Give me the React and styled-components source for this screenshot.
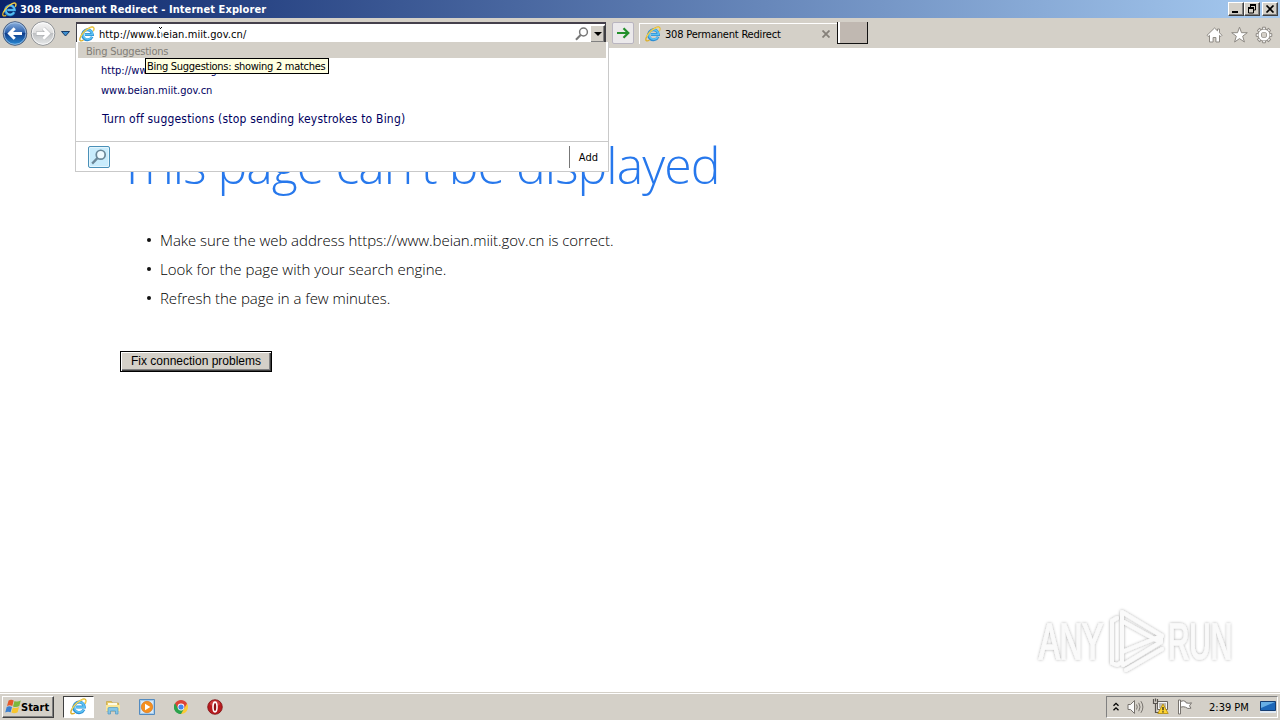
import React from 'react'
import styled, {createGlobalStyle} from 'styled-components'

const tahoma = '"DejaVu Sans Condensed", "DejaVu Sans", Tahoma, sans-serif'
const segoe = '"Open Sans", "Noto Sans", sans-serif'

const GlobalStyle = createGlobalStyle`
  * {
    box-sizing: border-box;
  }

  body {
    margin: 0;
    overflow: hidden;
    background: #fff;
  }

  svg {
    display: block;
    flex: none;
  }
`

const Screen = styled.div`
  position: relative;
  display: flex;
  flex-direction: column;
  width: 1280px;
  height: 720px;
  background: #fff;
  font-family: ${tahoma};
  font-size: 11px;
  color: #000;
`

const Label = styled.span`
  padding-top: ${props => props.$drop || 0}px;
  font-family: ${props => props.$font || tahoma};
  font-size: ${props => props.$size || 11}px;
  font-weight: ${props => props.$weight || 400};
  letter-spacing: ${props => props.$track || 0}px;
  color: ${props => props.$color || '#000'};
  line-height: 14px;
  white-space: nowrap;
`

const TitleBar = styled.header`
  display: flex;
  align-items: center;
  gap: 3px;
  height: 18px;
  padding: 0 2px 0 2px;
  background: linear-gradient(90deg, #0a246a, #a6caf0);
`

const WindowButtons = styled.div`
  display: flex;
  margin-left: auto;
`

const WindowButton = styled.button`
  display: flex;
  align-items: center;
  justify-content: center;
  width: 16px;
  height: 14px;
  margin-left: ${props => props.$gap || 0}px;
  padding: 0;
  border: 1px solid;
  border-color: #fff #404040 #404040 #fff;
  box-shadow: inset -1px -1px 0 #808080;
  background: #d4d0c8;
`

const ToolBar = styled.nav`
  display: flex;
  align-items: flex-start;
  height: 30px;
  padding: 3px 7px 0 2px;
  background: #d4d0c8;
`

const HistoryButtons = styled.div`
  display: flex;
  align-items: center;
  width: 74px;
  height: 25px;
  gap: 2px;
`

const AddressBar = styled.div`
  display: flex;
  align-items: center;
  width: 530px;
  height: 21px;
  margin-top: 1px;
  padding: 0 0 0 2px;
  border: 1px solid #404048;
  border-top: 2px solid #45404c;
  border-bottom: 0;
  background: #fff;
`

const AddressText = styled.div`
  display: flex;
  flex: 1;
  padding-left: 4px;
`

const DropButton = styled.button`
  display: flex;
  align-items: center;
  justify-content: center;
  width: 15px;
  height: 18px;
  margin-left: 1px;
  padding: 0;
  border: 1px solid;
  border-color: #fff #404040 #404040 #fff;
  box-shadow: inset -1px -1px 0 #808080;
  background: #d4d0c8;
`

const GoButton = styled.button`
  display: flex;
  align-items: center;
  justify-content: center;
  width: 22px;
  height: 22px;
  margin: 1px 5px 0 6px;
  padding: 0;
  border: 1px solid #b9b5c0;
  border-radius: 2px;
  background: #ebe9eb;
`

const Tab = styled.div`
  display: flex;
  align-items: center;
  width: 198px;
  height: 21px;
  margin-top: 2px;
  padding: 0 7px 0 5px;
  border-top: 1px solid #fff;
  border-left: 1px solid #fff;
`

const TabTitle = styled.div`
  display: flex;
  flex: 1;
  padding-left: 4px;
`

const NewTab = styled.div`
  width: 31px;
  height: 22px;
  margin-top: 1px;
  border: solid #111;
  border-width: 0 1px 1px 1px;
  box-shadow: inset 2px 0 0 #fff;
  background: #c0b8b1;
`

const Commands = styled.div`
  display: flex;
  align-items: center;
  gap: 7px;
  height: 28px;
  margin-left: auto;
`

const Page = styled.main`
  flex: 1;
  padding: 83px 0 0 120px;
`

const Heading = styled.h1`
  margin: 0 0 0 -1px;
  font-family: ${segoe};
  font-size: 50px;
  font-weight: 300;
  line-height: 68px;
  letter-spacing: -0.96px;
  color: #2778ec;
  white-space: nowrap;
`

const Tips = styled.ul`
  margin: 26px 0 0;
  padding: 0;
  list-style: none;
`

const Tip = styled.li`
  display: flex;
  align-items: center;
  height: 29px;
  padding-left: 27px;
  gap: 9px;

  &::before {
    content: '';
    width: 4px;
    height: 4px;
    border-radius: 50%;
    background: #111;
  }
`

const FixButton = styled.button`
  display: flex;
  align-items: center;
  justify-content: center;
  width: 152px;
  height: 21px;
  margin-top: 39px;
  padding: 0 0 2px;
  border: 1px solid #000;
  box-shadow: inset 1px 1px 0 #fff, inset -1px -1px 0 #404040, inset -2px -2px 0 #808080;
  background: #d4d0c8;
`

const Suggestions = styled.section`
  position: absolute;
  top: 42px;
  left: 75px;
  width: 534px;
  height: 130px;
  display: flex;
  flex-direction: column;
  border: 1px solid #c9c9c9;
  border-top: 0;
  background: #fff;
`

const SuggestionsTitle = styled.div`
  display: flex;
  align-items: center;
  height: 16px;
  margin: 0 2px;
  padding: 2px 0 0 8px;
  background: #d4d0c8;
`

const SuggestionList = styled.div`
  display: flex;
  flex: 1;
  flex-direction: column;
  padding: 3px 0 0 25px;
`

const Suggestion = styled.div`
  display: flex;
  align-items: center;
  height: 20px;
  margin-top: ${props => props.$top || 0}px;
  padding-left: ${props => props.$indent || 0}px;
`

const SuggestionsFooter = styled.div`
  display: flex;
  align-items: center;
  justify-content: space-between;
  height: 30px;
  padding: 0 10px 0 12px;
  border-top: 1px solid #c9c9c9;
`

const Provider = styled.div`
  display: flex;
  align-items: center;
  justify-content: center;
  width: 22px;
  height: 22px;
  border: 1px solid #4a90b8;
  border-radius: 2px;
  background: #c9ecfc;
  box-shadow: inset 0 0 0 1px #e4f6fe;
`

const AddLink = styled.div`
  display: flex;
  align-items: center;
  height: 22px;
  padding-left: 9px;
  border-left: 1px solid #777;
`

const Tooltip = styled.div`
  position: absolute;
  top: 58px;
  left: 145px;
  display: flex;
  align-items: center;
  width: 184px;
  height: 16px;
  padding-left: 1px;
  border: 1px solid #000;
  background: #ffffe1;
`

const Pointer = styled.svg`
  position: absolute;
  top: 26px;
  left: 158px;
`

const Watermark = styled.div`
  position: absolute;
  top: 604px;
  left: 1030px;
`

const TaskBar = styled.footer`
  display: flex;
  align-items: center;
  height: 28px;
  padding: 2px 2px 2px 2px;
  border-top: 1px solid #d4d0c8;
  box-shadow: inset 0 1px 0 #fff;
  background: #d4d0c8;
`

const StartButton = styled.button`
  display: flex;
  align-items: center;
  width: 52px;
  height: 22px;
  padding: 0 0 0 2px;
  border: 1px solid;
  border-color: #fff #404040 #404040 #fff;
  box-shadow: inset -1px -1px 0 #808080;
  background: #d4d0c8;
`

const TaskButton = styled.div`
  display: flex;
  align-items: center;
  justify-content: center;
  width: ${props => (props.$active ? 31 : 34)}px;
  height: 22px;
  margin-left: ${props => props.$left || 0}px;
  border: ${props => (props.$active ? '1px solid' : '0')};
  border-color: #404040 #fff #fff #404040;
  background: ${props => (props.$active ? '#fff' : 'transparent')};
`

const Tray = styled.div`
  display: flex;
  align-items: center;
  width: 172px;
  height: 22px;
  margin-left: auto;
  padding-left: 6px;
  border: 1px solid;
  border-color: #808080 #fff #fff #808080;
`

const TrayIcons = styled.div`
  display: flex;
  align-items: center;
  gap: 8px;
  width: 96px;
`

const Clock = styled.div`
  display: flex;
  width: 51px;
`

function IeIcon({size = 16}) {
    return (
        <svg width={size} height={size} viewBox="0 0 16 16" fill="none">
            <path d="M13.1 10.800A5 5 0 1 1 13.500 8.500H5.800" stroke="#2d8fd4" strokeWidth="2.800"/>
            <path d="M12.800 11A4.700 4.700 0 1 1 13.500 8.500H5.800" stroke="#5cc2f3" strokeWidth="1.600"/>
            <path d="M14.200 5.300C16 1.300 14.200.1 10.800 1.700 7 3.500 3.200 7.300 1.500 11c-1.600 3.400-.2 4.800 3 3.200" stroke="#dcb02c" strokeWidth="1.400"/>
            <path d="M14.200 4.800C15.500 1.500 14 .5 10.800 2 7 3.800 3.500 7.200 1.800 10.800" stroke="#fbe36a" strokeWidth=".8"/>
        </svg>
    )
}

function BackIcon() {
    return (
        <svg width="26" height="25" viewBox="0 0 26 25">
            <defs>
                <linearGradient id="back" x2="0" y2="1">
                    <stop stopColor="#8fb2de"/>
                    <stop offset=".45" stopColor="#2e63ae"/>
                    <stop offset=".5" stopColor="#103e8b"/>
                    <stop offset="1" stopColor="#2b8ed8"/>
                </linearGradient>
            </defs>
            <circle cx="13" cy="12.5" r="11.8" fill="url(#back)" stroke="#4b5f7e" strokeWidth="1"/>
            <circle cx="13" cy="12.5" r="10.8" fill="none" stroke="#b7d2ef" strokeWidth=".7"/>
            <path d="M20 12.500H7.500M12.700 7.300 7.500 12.500l5.200 5.200" fill="none" stroke="#fff" strokeWidth="3"/>
        </svg>
    )
}

function ForwardIcon() {
    return (
        <svg width="26" height="25" viewBox="0 0 26 25">
            <defs>
                <linearGradient id="forward" x2="0" y2="1">
                    <stop stopColor="#f6f6f6"/>
                    <stop offset=".48" stopColor="#dcdcdc"/>
                    <stop offset=".5" stopColor="#bfc1c3"/>
                    <stop offset="1" stopColor="#e8eaeb"/>
                </linearGradient>
            </defs>
            <circle cx="13" cy="12.5" r="11.8" fill="url(#forward)" stroke="#8d9094"/>
            <circle cx="13" cy="12.5" r="10.8" fill="none" stroke="#fff" strokeWidth=".8"/>
            <path d="M6 12.500h12.500M13.300 7.300l5.200 5.200-5.200 5.200" fill="none" stroke="#aaadb0" strokeWidth="4"/>
            <path d="M6.500 12.500h12M13.300 7.300l5.200 5.200-5.200 5.200" fill="none" stroke="#fff" strokeWidth="3"/>
        </svg>
    )
}

function SearchIcon({size = 14, color = '#777', fill = 'none'}) {
    return (
        <svg width={size} height={size} viewBox="0 0 14 14" stroke={color}>
            <circle cx="8.5" cy="5" r="3.9" strokeWidth="1.5" fill={fill}/>
            <path d="M5.6 8 1 12.8" strokeWidth="2"/>
        </svg>
    )
}

function WindowsFlag() {
    return (
        <svg width="16" height="16" viewBox="0 0 16 16">
            <path d="M3.600 1.500C5.400.4 7 .5 8.700 1.500L7.300 7C5.500 6.100 3.900 6.200 2 7z" fill="#e5592a"/>
            <path d="M9.500 1.900c2 1 3.900.9 6.300-.3L14.300 7c-2.200 1.100-4.200 1.200-6.300.4z" fill="#7cb83c"/>
            <path d="M1.700 8C3.500 7.100 5.200 7.200 7 8L5.600 13.300C3.900 12.500 2.200 12.500.2 13.400z" fill="#3b7fd0"/>
            <path d="M7.800 8.400c2.100.9 4 .8 6.200-.3l-1.400 5.200c-2.200 1.200-4.200 1.200-6.200.3z" fill="#f7c52e"/>
        </svg>
    )
}

function ExplorerIcon() {
    return (
        <svg width="16" height="16" viewBox="0 0 16 16">
            <path d="M1.500 2.500h5l1 1.500h6v8h-12z" fill="#e8c964" stroke="#c5a342" strokeWidth=".7"/>
            <path d="M3 4h9v3H3z" fill="#fffbe4"/>
            <path d="M1 6h14v6H1z" fill="#fae697"/>
            <path d="M3 15V9.500Q3 8.500 4 8.500h8q1 0 1 1V15h-2.500v-3h-5v3z" fill="#84c5e6" stroke="#4c98c3" strokeWidth=".7"/>
        </svg>
    )
}

function PlayerIcon() {
    return (
        <svg width="16" height="16" viewBox="0 0 16 16">
            <path d="M.5.500h15v15H.500z" fill="#a8cdec" stroke="#538bc0"/>
            <path d="M2 2h12v12H2z" fill="#d6e9f8"/>
            <circle cx="8" cy="8" r="5.700" fill="#f5901f" stroke="#d66c0b" strokeWidth=".6"/>
            <path d="M6 4.800 11.300 8 6 11.200z" fill="#fff"/>
        </svg>
    )
}

function ChromeIcon() {
    return (
        <svg width="14" height="14" viewBox="0 0 14 14">
            <path d="M7 7 .94 3.500A7 7 0 0 1 13.060 3.500z" fill="#dc4437"/>
            <path d="M7 7 13.060 3.500A7 7 0 0 1 7 14z" fill="#fbcb36"/>
            <path d="M7 7v7A7 7 0 0 1 .94 3.500z" fill="#2ba24c"/>
            <path d="M7 3.500h6.060L10 8.800zM4 8.800.94 3.500 7 3.500z" fill="#dc4437"/>
            <path d="M.94 3.500 4 8.800 7 10.500 10 8.800 7 14A7 7 0 0 1 .94 3.500z" fill="#2ba24c"/>
            <circle cx="7" cy="7" r="3.400" fill="#fff"/>
            <circle cx="7" cy="7" r="2.600" fill="#4385ed"/>
        </svg>
    )
}

function OperaIcon() {
    return (
        <svg width="16" height="16" viewBox="0 0 16 16">
            <circle cx="8" cy="8" r="7.300" fill="#b91b1f" stroke="#7d1013" strokeWidth=".8"/>
            <ellipse cx="8" cy="4.500" rx="5" ry="3" fill="#d95555" opacity=".6"/>
            <ellipse cx="8" cy="8" rx="2" ry="4.900" fill="#8d1014" stroke="#fff" strokeWidth="1.600"/>
        </svg>
    )
}

function HomeIcon() {
    return (
        <svg width="18" height="18" viewBox="0 0 18 18">
            <path d="M9.500 2 2 9.300l1.200 1.200L4.500 9.400V16h3.600v-4.500h2.800V16h3.600V9.400l1.300 1.100L17 9.300l-2.500-2.500V3h-2v1.900z" fill="#fff" stroke="#8d8983" strokeWidth="1"/>
        </svg>
    )
}

function StarIcon() {
    return (
        <svg width="18" height="18" viewBox="0 0 18 18">
            <path d="m9.500 1.200 2 5.500h5.800l-4.600 3.500 1.700 5.800-4.900-3.400L4.600 16l1.700-5.800-4.600-3.500h5.800z" fill="#fff" stroke="#8d8983"/>
        </svg>
    )
}

function GearIcon() {
    const teeth = [0, 45, 90, 135, 180, 225, 270, 315]
    return (
        <svg width="18" height="18" viewBox="0 0 18 18">
            {teeth.map(angle => (
                <path key={angle} d="M7.200 4 7.600 1.200h2.800L10.800 4" fill="#fff" stroke="#8d8983" transform={`rotate(${angle} 9 9)`}/>
            ))}
            <circle cx="9" cy="9" r="4.300" fill="none" stroke="#8d8983" strokeWidth="3.800"/>
            <circle cx="9" cy="9" r="4.300" fill="none" stroke="#fff" strokeWidth="2.500"/>
        </svg>
    )
}

function TrayGlyphs() {
    return (
        <TrayIcons>
            <svg width="6" height="10" viewBox="0 0 6 10" fill="none" stroke="#000" strokeWidth="1.300">
                <path d="M.5 3.800 3 1.300l2.500 2.500M.5 8.300 3 5.800l2.500 2.500"/>
            </svg>
            <svg width="17" height="16" viewBox="0 0 17 16" fill="none" stroke="#77736e">
                <path d="M1 5.500h2.500L7.500 1.500v13l-4-4H1z" fill="#fafafa"/>
                <path d="M9.500 5.500q1.500 2.500 0 5M11.700 3.800q2.700 4.200 0 8.400M13.900 2.200q4 5.800 0 11.600"/>
            </svg>
            <svg width="17" height="17" viewBox="0 0 17 17">
                <path d="M5.500 3.500h10v8h-10z" fill="#f4f4f4" stroke="#67635e"/>
                <path d="M7 5h7v5H7z" fill="#bcb9b4"/>
                <path d="M1.500 1v4.500h4V1M3.500 5.500v9H8M3.500.500v3" fill="none" stroke="#57534e" strokeWidth="1.200"/>
                <path d="m11 6 5.200 9.500H5.800z" fill="#ffd530" stroke="#b18908" strokeWidth=".8"/>
                <path d="M11 9v3.200M11 13.200v1.300" stroke="#222" strokeWidth="1.300"/>
            </svg>
            <svg width="16" height="16" viewBox="0 0 16 16" fill="#fff" stroke="#77736e">
                <path d="M3.500 2.500q3-1.500 5 0l.5 1.300q3 1 5.500 0l-2 3 1.500 2.400q-3.500 1-5.500-1-2-1-5 0z"/>
                <path d="M1.500 1v14h2V1z"/>
            </svg>
        </TrayIcons>
    )
}

function WatermarkLogo() {
    return (
        <svg width="212" height="72" viewBox="0 0 212 72">
            <defs>
                <filter id="soft" x="-10%" y="-20%" width="120%" height="140%">
                    <feDropShadow dx="0" dy="0" stdDeviation="1.800" floodColor="#000" floodOpacity=".34"/>
                </filter>
            </defs>
            <g filter="url(#soft)" fill="#fafafa" fontFamily='"Liberation Sans Narrow", "Liberation Sans", sans-serif' fontSize="50" stroke="#fafafa" strokeWidth="1.500">
                <text x="9" y="55" textLength="64" lengthAdjust="spacingAndGlyphs">ANY</text>
                <text x="138" y="55" textLength="64" lengthAdjust="spacingAndGlyphs">RUN</text>
                <g fill="none" strokeWidth="4" strokeLinejoin="round" strokeLinecap="round">
                    <path d="M92 49V8l40 24"/>
                    <path d="M92 17l36 20"/>
                    <path d="M87 14l-5 3v42l5 2 5-3"/>
                    <path d="M92 58V48l39-16v6L93 61M96 66l36-21"/>
                </g>
            </g>
        </svg>
    )
}

export default function App() {
    return (
        <>
            <GlobalStyle/>
            <Screen>
                <TitleBar>
                    <IeIcon size={15}/>
                    <Label $weight={700} $track={0.08} $drop={1} $color="#fff">308 Permanent Redirect - Internet Explorer</Label>
                    <WindowButtons>
                        <WindowButton>
                            <svg width="10" height="10"><path d="M1 7h6v2H1z"/></svg>
                        </WindowButton>
                        <WindowButton>
                            <svg width="10" height="10" fill="none" stroke="#000">
                                <path d="M3 .500h6M3.500 0v3M8.500 0v6H6.500M1 3.500h6M1.500 3v6h5V3"/>
                                <path d="M3 1h6M1 4h6" strokeWidth="2"/>
                            </svg>
                        </WindowButton>
                        <WindowButton $gap={2}>
                            <svg width="10" height="8"><path d="m1.500.500 7 7m0-7-7 7" stroke="#000" strokeWidth="1.700"/></svg>
                        </WindowButton>
                    </WindowButtons>
                </TitleBar>

                <ToolBar>
                    <HistoryButtons>
                        <BackIcon/>
                        <ForwardIcon/>
                        <svg width="16" height="8"><path d="M3.500 1.500h8L7.500 6z" fill="#3d8fd0" stroke="#173b67"/></svg>
                    </HistoryButtons>
                    <AddressBar>
                        <IeIcon size={16}/>
                        <AddressText>
                            <Label $track={0.08} $drop={2}>http://www.beian.miit.gov.cn/</Label>
                        </AddressText>
                        <SearchIcon/>
                        <DropButton>
                            <svg width="8" height="4"><path d="M0 0h8L4 4z"/></svg>
                        </DropButton>
                    </AddressBar>
                    <GoButton>
                        <svg width="14" height="12" fill="none" stroke="#23902c" strokeWidth="2.200">
                            <path d="M1 6h11M7.500 1.200 12.300 6l-4.800 4.800"/>
                        </svg>
                    </GoButton>
                    <Tab>
                        <IeIcon size={16}/>
                        <TabTitle>
                            <Label $track={-0.18} $drop={1}>308 Permanent Redirect</Label>
                        </TabTitle>
                        <svg width="8" height="8"><path d="m.5.500 7 7m0-7-7 7" stroke="#858079" strokeWidth="1.800"/></svg>
                    </Tab>
                    <NewTab/>
                    <Commands>
                        <HomeIcon/>
                        <StarIcon/>
                        <GearIcon/>
                    </Commands>
                </ToolBar>

                <Page>
                    <Heading>This page can't be displayed</Heading>
                    <Tips>
                        <Tip><Label $font={segoe} $size={15} $weight={300} $track={-0.05}>Make sure the web address https://www.beian.miit.gov.cn is correct.</Label></Tip>
                        <Tip><Label $font={segoe} $size={15} $weight={300}>Look for the page with your search engine.</Label></Tip>
                        <Tip><Label $font={segoe} $size={15} $weight={300} $track={-0.05}>Refresh the page in a few minutes.</Label></Tip>
                    </Tips>
                    <FixButton>
                        <Label $font={'"Liberation Sans", Arial, sans-serif'} $size={12}>Fix connection problems</Label>
                    </FixButton>
                </Page>

                <TaskBar>
                    <StartButton>
                        <WindowsFlag/>
                        <Label $weight={700} $drop={2}>Start</Label>
                    </StartButton>
                    <TaskButton $active $left={9}><IeIcon size={17}/></TaskButton>
                    <TaskButton $left={2}><ExplorerIcon/></TaskButton>
                    <TaskButton><PlayerIcon/></TaskButton>
                    <TaskButton><ChromeIcon/></TaskButton>
                    <TaskButton><OperaIcon/></TaskButton>
                    <Tray>
                        <TrayGlyphs/>
                        <Clock><Label $drop={2}>2:39 PM</Label></Clock>
                        <svg width="16" height="14" viewBox="0 0 16 14">
                            <path d="M.5 1.500h15v9H.500z" fill="#1d67b8" stroke="#153d72"/>
                            <path d="M1 2h14L1 8z" fill="#67aee5"/>
                            <path d="M0 11h16v2H0z" fill="#dfe8f1"/>
                        </svg>
                    </Tray>
                </TaskBar>

                <Suggestions>
                    <SuggestionsTitle><Label $track={-0.22} $drop={2} $color="#817d77">Bing Suggestions</Label></SuggestionsTitle>
                    <SuggestionList>
                        <Suggestion><Label $color="#000060">http://www.beian.miit.gov.cn</Label></Suggestion>
                        <Suggestion><Label $color="#000060">www.beian.miit.gov.cn</Label></Suggestion>
                        <Suggestion $top={8} $indent={1}><Label $size={12} $track={0.2} $color="#000060">Turn off suggestions (stop sending keystrokes to Bing)</Label></Suggestion>
                    </SuggestionList>
                    <SuggestionsFooter>
                        <Provider><SearchIcon size={16} color="#6a8798" fill="#eefaff"/></Provider>
                        <AddLink><Label $drop={2}>Add</Label></AddLink>
                    </SuggestionsFooter>
                </Suggestions>
                <Tooltip><Label $track={-0.28} $drop={2}>Bing Suggestions: showing 2 matches</Label></Tooltip>
                <Pointer width="6" height="14">
                    <path d="M2 3h1.500v9H2z" fill="#fff"/>
                    <path d="M1 1.500h1M3 1.500h1M2.500 2v1" stroke="#000"/>
                </Pointer>
                <Watermark><WatermarkLogo/></Watermark>
            </Screen>
        </>
    )
}
